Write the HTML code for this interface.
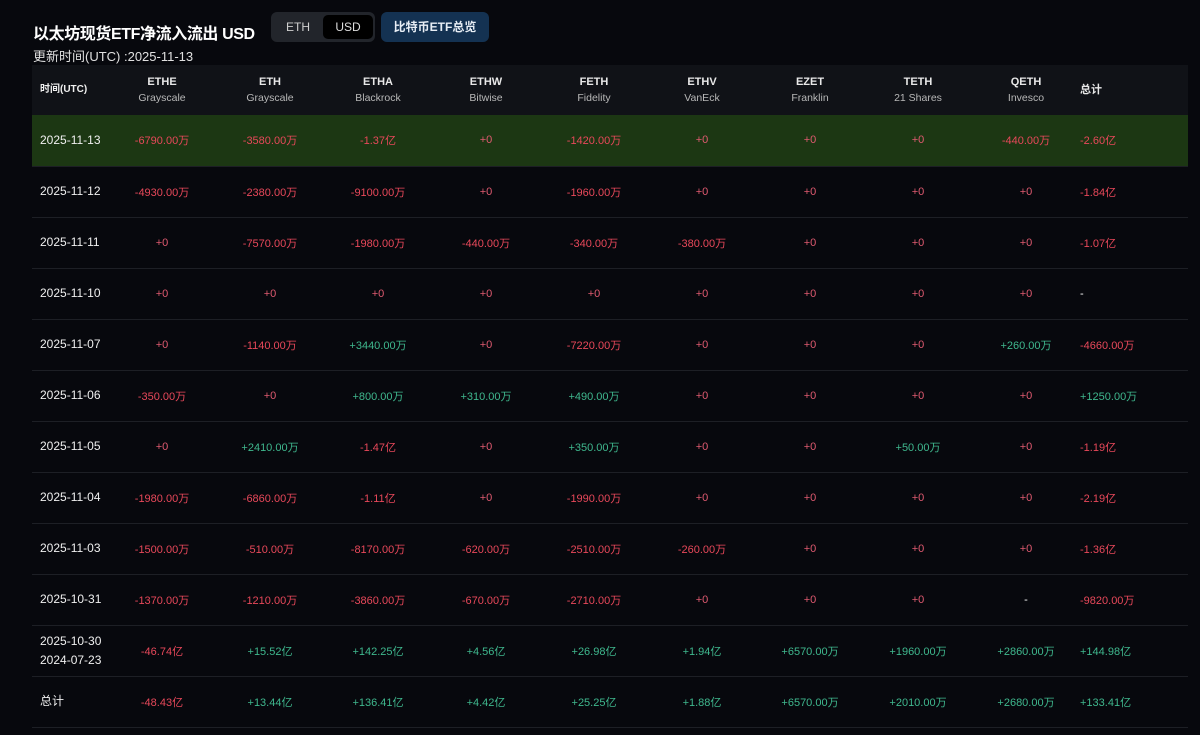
<!DOCTYPE html>
<html><head><meta charset="utf-8">
<style>
body{margin:0;width:1200px;height:735px;background:#07080d;font-family:"Liberation Sans","Noto Sans CJK SC",sans-serif;color:#e8e8e8;overflow:hidden;position:relative}
.title{position:absolute;left:33px;top:20px;font-size:16px;font-weight:bold;color:#fff;letter-spacing:-0.4px;white-space:nowrap}
.sub{position:absolute;left:33px;top:46px;font-size:13px;color:#e0e0e0}
.tog{position:absolute;left:271px;top:12px;width:104px;height:30px;border-radius:6px;background:#22252b;font-size:12px}
.tog span{position:absolute;top:3px;height:24px;line-height:24px;text-align:center;width:50px}
.tog .a{left:2px;color:#cfcfcf}.tog .b{left:52px;background:#000;border-radius:5px;color:#ddd}
.btn{position:absolute;left:381px;top:12px;width:108px;height:30px;border-radius:6px;background:#143252;color:#e8eef5;font-size:12px;font-weight:bold;line-height:30px;text-align:center}
table{position:absolute;left:32px;top:65px;width:1156px;border-collapse:collapse;table-layout:fixed}
td,th{padding:0;text-align:center;font-size:11px}
thead tr{background:#101217;height:50px}
th{font-weight:bold;color:#e8e8e8;line-height:16px}
th small{display:block;font-weight:normal;color:#b8b8b8;font-size:10.5px}
tbody tr{height:51px;border-top:1px solid #1d1f25}
tbody tr.hl{background:#1c3713;border-top:none}
td:first-child,th:first-child{text-align:left;padding-left:8px;color:#f0f0f0}
td:last-child,th:last-child{text-align:left;padding-left:0}
th:first-child{font-size:10px}
td:first-child{font-size:12px;line-height:19px}
.r{color:#e8485a}.g{color:#3fb88e}.z{color:#e05a70}.w{color:#fff}
</style></head><body>
<div class="title">以太坊现货ETF净流入流出 USD</div>
<div class="sub">更新时间(UTC) :2025-11-13</div>
<div class="tog"><span class="a">ETH</span><span class="b">USD</span></div>
<div class="btn">比特币ETF总览</div>
<table>
<colgroup><col style="width:76px"><col style="width:108px"><col style="width:108px"><col style="width:108px"><col style="width:108px"><col style="width:108px"><col style="width:108px"><col style="width:108px"><col style="width:108px"><col style="width:108px"><col></colgroup>
<thead><tr><th>时间(UTC)</th><th>ETHE<small>Grayscale</small></th><th>ETH<small>Grayscale</small></th><th>ETHA<small>Blackrock</small></th><th>ETHW<small>Bitwise</small></th><th>FETH<small>Fidelity</small></th><th>ETHV<small>VanEck</small></th><th>EZET<small>Franklin</small></th><th>TETH<small>21 Shares</small></th><th>QETH<small>Invesco</small></th><th>总计</th></tr></thead>
<tbody>
<tr class="hl"><td>2025-11-13</td><td class="r">-6790.00万</td><td class="r">-3580.00万</td><td class="r">-1.37亿</td><td class="z">+0</td><td class="r">-1420.00万</td><td class="z">+0</td><td class="z">+0</td><td class="z">+0</td><td class="r">-440.00万</td><td class="r">-2.60亿</td></tr>
<tr><td>2025-11-12</td><td class="r">-4930.00万</td><td class="r">-2380.00万</td><td class="r">-9100.00万</td><td class="z">+0</td><td class="r">-1960.00万</td><td class="z">+0</td><td class="z">+0</td><td class="z">+0</td><td class="z">+0</td><td class="r">-1.84亿</td></tr>
<tr><td>2025-11-11</td><td class="z">+0</td><td class="r">-7570.00万</td><td class="r">-1980.00万</td><td class="r">-440.00万</td><td class="r">-340.00万</td><td class="r">-380.00万</td><td class="z">+0</td><td class="z">+0</td><td class="z">+0</td><td class="r">-1.07亿</td></tr>
<tr><td>2025-11-10</td><td class="z">+0</td><td class="z">+0</td><td class="z">+0</td><td class="z">+0</td><td class="z">+0</td><td class="z">+0</td><td class="z">+0</td><td class="z">+0</td><td class="z">+0</td><td class="w">-</td></tr>
<tr><td>2025-11-07</td><td class="z">+0</td><td class="r">-1140.00万</td><td class="g">+3440.00万</td><td class="z">+0</td><td class="r">-7220.00万</td><td class="z">+0</td><td class="z">+0</td><td class="z">+0</td><td class="g">+260.00万</td><td class="r">-4660.00万</td></tr>
<tr><td>2025-11-06</td><td class="r">-350.00万</td><td class="z">+0</td><td class="g">+800.00万</td><td class="g">+310.00万</td><td class="g">+490.00万</td><td class="z">+0</td><td class="z">+0</td><td class="z">+0</td><td class="z">+0</td><td class="g">+1250.00万</td></tr>
<tr><td>2025-11-05</td><td class="z">+0</td><td class="g">+2410.00万</td><td class="r">-1.47亿</td><td class="z">+0</td><td class="g">+350.00万</td><td class="z">+0</td><td class="z">+0</td><td class="g">+50.00万</td><td class="z">+0</td><td class="r">-1.19亿</td></tr>
<tr><td>2025-11-04</td><td class="r">-1980.00万</td><td class="r">-6860.00万</td><td class="r">-1.11亿</td><td class="z">+0</td><td class="r">-1990.00万</td><td class="z">+0</td><td class="z">+0</td><td class="z">+0</td><td class="z">+0</td><td class="r">-2.19亿</td></tr>
<tr><td>2025-11-03</td><td class="r">-1500.00万</td><td class="r">-510.00万</td><td class="r">-8170.00万</td><td class="r">-620.00万</td><td class="r">-2510.00万</td><td class="r">-260.00万</td><td class="z">+0</td><td class="z">+0</td><td class="z">+0</td><td class="r">-1.36亿</td></tr>
<tr><td>2025-10-31</td><td class="r">-1370.00万</td><td class="r">-1210.00万</td><td class="r">-3860.00万</td><td class="r">-670.00万</td><td class="r">-2710.00万</td><td class="z">+0</td><td class="z">+0</td><td class="z">+0</td><td class="w">-</td><td class="r">-9820.00万</td></tr>
<tr><td>2025-10-30<br>2024-07-23</td><td class="r">-46.74亿</td><td class="g">+15.52亿</td><td class="g">+142.25亿</td><td class="g">+4.56亿</td><td class="g">+26.98亿</td><td class="g">+1.94亿</td><td class="g">+6570.00万</td><td class="g">+1960.00万</td><td class="g">+2860.00万</td><td class="g">+144.98亿</td></tr>
<tr style="border-bottom:1px solid #1d1f25"><td>总计</td><td class="r">-48.43亿</td><td class="g">+13.44亿</td><td class="g">+136.41亿</td><td class="g">+4.42亿</td><td class="g">+25.25亿</td><td class="g">+1.88亿</td><td class="g">+6570.00万</td><td class="g">+2010.00万</td><td class="g">+2680.00万</td><td class="g">+133.41亿</td></tr>
</tbody></table>
</body></html>
